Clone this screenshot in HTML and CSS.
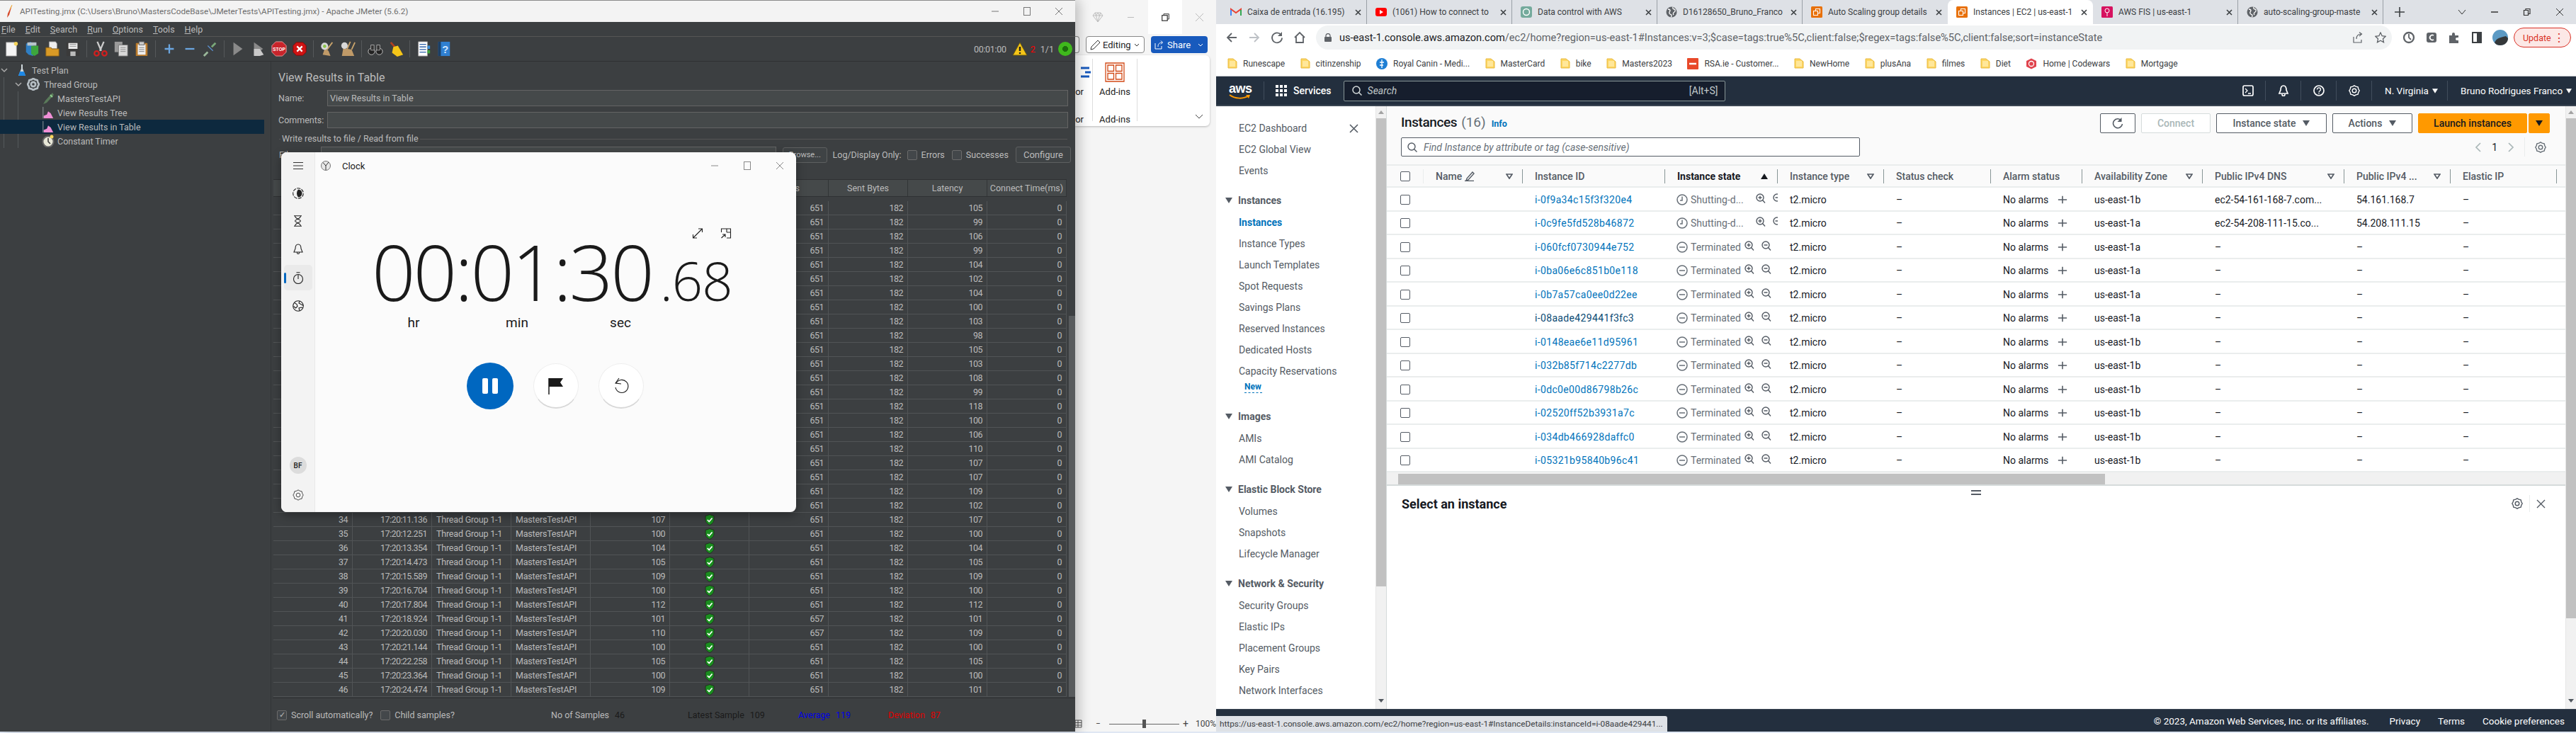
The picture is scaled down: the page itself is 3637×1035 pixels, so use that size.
FILE: index.html
```html
<!DOCTYPE html>
<html lang="en">
<head>
<meta charset="utf-8">
<title>Desktop</title>
<link rel="stylesheet" href="styles.css">
</head>
<body>
<svg class="sprite" width="0" height="0" aria-hidden="true">
  <symbol id="shield" viewBox="0 0 14 16"><path d="M7 .5 13 2.500V8c0 3.500-3 6-6 7.500C4 14 1 11.500 1 8V2.500z" fill="#1a8f1f" stroke="#20301f"/><path d="M3.800 8 6.200 10.500 10.500 5.500" fill="none" stroke="#fff" stroke-width="1.800"/></symbol>
  <symbol id="folder" viewBox="0 0 14 15"><path d="M1 1h7l5 4v9H1z" fill="#fdd663" stroke="#e8b93e"/><path d="M3 4h8v8H3z" fill="#ffe79a"/></symbol>
  <symbol id="globe" viewBox="0 0 16 16"><circle cx="8" cy="8" r="7.500" fill="#5f6368"/><path d="M3 4c2 0 3 1 3 2S4 8 5 10s3 1 3 3-1 2-1 2M10 1c-1 2 1 3 2 3s2 3 0 4-2 3-1 4" fill="none" stroke="#fff" stroke-width="1.300"/></symbol>
  <symbol id="awsbox" viewBox="0 0 16 16"><rect width="16" height="16" rx="1.500" fill="#e8710a"/><path d="M3.500 6.500h6v6h-6zM6.500 6.500v-3h6v6h-3" fill="none" stroke="#fff" stroke-width="1.100"/></symbol>
  <symbol id="tri" viewBox="0 0 10 8"><path d="M1 1h8L5 7z" fill="none" stroke="#545b64" stroke-width="1.700"/></symbol>
  <symbol id="down" viewBox="0 0 10 8"><path d="M0 0h10L5 8z" fill="currentColor"/></symbol>
  <symbol id="zplus" viewBox="0 0 14 14"><circle cx="6" cy="6" r="5" fill="none" stroke="#545b64" stroke-width="1.400"/><path d="M9.500 9.500 13 13.500M3.500 6h5M6 3.500v5" stroke="#545b64" stroke-width="1.400"/></symbol>
  <symbol id="zminus" viewBox="0 0 14 14"><circle cx="6" cy="6" r="5" fill="none" stroke="#545b64" stroke-width="1.400"/><path d="M9.500 9.500 13 13.500M3.500 6h5" stroke="#545b64" stroke-width="1.400"/></symbol>
  <symbol id="stclock" viewBox="0 0 16 16"><circle cx="8" cy="8" r="7" fill="none" stroke="#687078" stroke-width="1.500"/><path d="M8 3.500V9H5" fill="none" stroke="#687078" stroke-width="1.500"/></symbol>
  <symbol id="stminus" viewBox="0 0 16 16"><circle cx="8" cy="8" r="7" fill="none" stroke="#687078" stroke-width="1.500"/><path d="M4 8h8" stroke="#687078" stroke-width="1.500"/></symbol>
  <symbol id="plus" viewBox="0 0 16 16"><path d="M8 2v12M1 8h14" stroke="#545b64" stroke-width="1.800"/></symbol>
  <symbol id="gear" viewBox="0 0 20 20"><path d="M10 1 12.800 2.700 16.400 3.600 17.300 7.200 19 10 17.300 12.800 16.400 16.400 12.800 17.300 10 19 7.200 17.300 3.600 16.400 2.700 12.800 1 10 2.700 7.200 3.600 3.600 7.200 2.700Z" fill="none" stroke="currentColor"/><circle cx="10" cy="10" r="3.500" fill="none" stroke="currentColor"/></symbol>
  <symbol id="graph" viewBox="0 0 18 20"><path d="M2 19h15l-4-8-4-3-2 5-5 2z" fill="#ef8fd6"/><path d="M1 1v18" stroke="#9aa0a6"/></symbol>
  <symbol id="tabx" viewBox="0 0 9 9"><path d="M1 1l7 7M8 1 1 8" stroke="#3c4043" stroke-width="1.600"/></symbol>
</svg>

<section class="win jm">
  <header class="jm-title">
    <svg class="jm-feather" width="10" height="20" viewBox="0 0 10 20"><path d="M9 1 3 13l-1 6 3-4z" fill="#d64a2a"/><path d="M9 1 6 7" stroke="#f0b030"/></svg>
    <span class="jm-title-text">APITesting.jmx (C:\Users\Bruno\MastersCodeBase\JMeterTests\APITesting.jmx) - Apache JMeter (5.6.2)</span>
    <span class="winctl jm-ctl">
      <svg width="12" height="12" viewBox="0 0 12 12"><path d="M1 6h10" stroke="#777"/></svg>
      <svg width="12" height="12" viewBox="0 0 12 12"><rect x="1.500" y=".5" width="9" height="11" fill="none" stroke="#777"/></svg>
      <svg width="12" height="12" viewBox="0 0 12 12"><path d="M1 1l10 10M11 1 1 11" stroke="#777"/></svg>
    </span>
  </header>
  <nav class="jm-menu">
    <span><u>F</u>ile</span><span><u>E</u>dit</span><span><u>S</u>earch</span><span><u>R</u>un</span><span><u>O</u>ptions</span><span><u>T</u>ools</span><span><u>H</u>elp</span>
  </nav>
  <div class="jm-tools">
    <svg viewBox="0 0 24 24"><path d="M4 2h13l3 3v18H4z" fill="#f5f5f5" stroke="#999"/><circle cx="19" cy="4" r="3" fill="#f6d55c"/></svg>
    <svg viewBox="0 0 24 24"><path d="M3 4l7-3 4 3v19l-7-2-4-4z" fill="#2f7fc4"/><path d="M11 7h11v12l-6 4-5-3z" fill="#3da63d"/><path d="M5 2h14v5H5z" fill="#b8c4cc"/></svg>
    <svg viewBox="0 0 24 24"><path d="M7 1h10l2 3v8H7z" fill="#eee" stroke="#999"/><path d="M2 10h8l1 2h11v11H2z" fill="#d99a26" stroke="#8f6416"/></svg>
    <svg viewBox="0 0 24 24"><path d="M2 2h20v21H2z" fill="#3a3a3a"/><path d="M5 3h14v9H5z" fill="#e9e9e9"/><path d="M7 5h10M7 8h10" stroke="#888"/><path d="M8 16h8v7H8z" fill="#bbb"/></svg>
    <i class="sep"></i>
    <svg viewBox="0 0 24 24"><path d="M7 1l6 14M17 1l-6 14" stroke="#ccc" stroke-width="2.500"/><circle cx="6" cy="19" r="3.500" fill="none" stroke="#d11f1f" stroke-width="2.500"/><circle cx="18" cy="19" r="3.500" fill="none" stroke="#d11f1f" stroke-width="2.500"/></svg>
    <svg viewBox="0 0 24 24"><path d="M2 1h12v16H2z" fill="#9a9a9a"/><path d="M8 6h14v17H8z" fill="#d9d9d9" stroke="#777"/><path d="M11 10h8M11 13h8M11 16h8" stroke="#888"/></svg>
    <svg viewBox="0 0 24 24"><rect x="3" y="3" width="18" height="20" rx="1" fill="#b97a2b"/><rect x="6" y="5" width="12" height="16" fill="#eee"/><rect x="8" y="1" width="8" height="5" fill="#ccc" stroke="#666"/><path d="M8 10h8M8 13h8M8 16h8" stroke="#777"/></svg>
    <i class="sep"></i>
    <svg viewBox="0 0 24 24"><path d="M12 5v14M5 12h14" stroke="#6ba6e0" stroke-width="2.500"/></svg>
    <svg viewBox="0 0 24 24"><path d="M5 12h14" stroke="#6ba6e0" stroke-width="2.500"/></svg>
    <svg viewBox="0 0 24 24"><path d="M14 9l6-6" stroke="#7aa87a" stroke-width="3"/><path d="M2 23l6-6" stroke="#9ab89a" stroke-width="3"/><path d="M8 7l8 8" stroke="#5a8ecc" stroke-width="1.500"/></svg>
    <i class="sep"></i>
    <svg viewBox="0 0 24 24"><path d="M5 2l14 10L5 22z" fill="#8a8a8a"/></svg>
    <svg viewBox="0 0 24 24"><path d="M5 2l14 10L5 22z" fill="#8a8a8a"/><path d="M5 12h9l6 9-6 2H5z" fill="#c9c9c9"/></svg>
    <svg viewBox="0 0 24 24"><path d="M7 1h10l6 6v10l-6 6H7l-6-6V7z" fill="#c8242b" stroke="#e8a0a0"/><text x="12" y="15" class="stop-word">STOP</text></svg>
    <svg viewBox="0 0 24 24"><path d="M7 2h10l5 5v10l-5 5H7l-5-5V7z" fill="#d01414" stroke="#7a0a0a"/><path d="M8 8l8 8M16 8l-8 8" stroke="#fff" stroke-width="2.500"/></svg>
    <i class="sep"></i>
    <svg viewBox="0 0 24 24"><path d="M20 2 11 14" stroke="#c9a36b" stroke-width="2"/><path d="M8 12l6 3 3 8-12-2z" fill="#c09a68"/><circle cx="8" cy="8" r="5.500" fill="#d8d8d8"/><circle cx="8" cy="8" r="2.500" fill="#8bc34a"/></svg>
    <svg viewBox="0 0 24 24"><path d="M16 1 11 12M23 2l-5 11" stroke="#c9a36b" stroke-width="2"/><path d="M5 11l13 2 4 10H3z" fill="#c09a68"/><circle cx="7" cy="7" r="5" fill="#d8d8d8"/></svg>
    <i class="sep"></i>
    <svg viewBox="0 0 24 24"><circle cx="6" cy="16" r="5" fill="#222" stroke="#ccc"/><circle cx="18" cy="16" r="5" fill="#222" stroke="#ccc"/><path d="M5 6h5v8H5zM14 6h5v8h-5z" fill="#333" stroke="#aaa"/></svg>
    <svg viewBox="0 0 24 24"><path d="M4 2l7 8" stroke="#b04020" stroke-width="3"/><path d="M8 9l7-2 8 14-9 3-8-6z" fill="#f5c518"/></svg>
    <i class="sep"></i>
    <svg viewBox="0 0 24 24"><path d="M4 1h14v22H4z" fill="#fff" stroke="#999"/><path d="M6 5h10M6 9h10M6 13h10M6 17h10" stroke="#2a5fa8" stroke-width="1.500"/><path d="M18 7h4v5h-4z" fill="#3a8fd8"/><path d="M18 14h4v5h-4z" fill="#3da63d"/></svg>
    <svg viewBox="0 0 24 24"><path d="M3 1h18v22H3z" fill="#2f7fd0"/><path d="M3 1h4v22H3z" fill="#1c3f66"/><text x="14" y="18" class="help-word">?</text></svg>
    <span class="jm-status">
      <span class="jm-timer">00:01:00</span>
      <svg width="22" height="20" viewBox="0 0 22 20"><path d="M11 1 21 19H1z" fill="#f5c518" stroke="#6b5a10"/><path d="M11 7v6" stroke="#222" stroke-width="2.500"/><circle cx="11" cy="16" r="1.300" fill="#222"/></svg>
      <span class="jm-red">2</span>
      <span class="jm-count">1/1</span>
      <span class="jm-led"></span>
    </span>
  </div>
  <div class="jm-body">
    <aside class="jm-tree">
      <div class="tr lvl0"><svg class="chev" width="10" height="10" viewBox="0 0 10 10"><path d="M1 3l4 4 4-4" fill="none" stroke="#aaa" stroke-width="1.500"/></svg><svg width="12" height="18" viewBox="0 0 12 18"><path d="M5 1h2v6l4 10H1L5 7z" fill="#cfd8dc"/><path d="M3 11h6l2 6H1z" fill="#1e88e5"/></svg><span>Test Plan</span></div>
      <div class="tr lvl1"><svg class="chev" width="10" height="10" viewBox="0 0 10 10"><path d="M1 3l4 4 4-4" fill="none" stroke="#aaa" stroke-width="1.500"/></svg><svg class="tg" width="18" height="18"><use href="#gear"/></svg><span>Thread Group</span></div>
      <div class="tr lvl2"><svg width="18" height="18" viewBox="0 0 18 18"><path d="M15 1 5 12l-3 5 5-2L17 4z" fill="#5a7a5a"/><path d="M12 4l3 3" stroke="#8fd08f" stroke-width="2"/></svg><span>MastersTestAPI</span></div>
      <div class="tr lvl2"><svg width="18" height="18"><use href="#graph"/></svg><span>View Results Tree</span></div>
      <div class="tr lvl2 sel"><svg width="18" height="18"><use href="#graph"/></svg><span>View Results in Table</span></div>
      <div class="tr lvl2"><svg width="18" height="18" viewBox="0 0 18 18"><circle cx="9" cy="10" r="7.500" fill="#e8e8d8" stroke="#666" stroke-width="2"/><path d="M9 5v5l3 3" fill="none" stroke="#333" stroke-width="1.500"/><circle cx="14" cy="3" r="2.500" fill="#f6d55c"/></svg><span>Constant Timer</span></div>
    </aside>
    <div class="jm-split"></div>
    <main class="jm-panel">
      <h2 class="jm-h">View Results in Table</h2>
      <div class="jm-field"><label>Name:</label><div class="jm-input">View Results in Table</div></div>
      <div class="jm-field"><label>Comments:</label><div class="jm-input"></div></div>
      <div class="jm-legend"><span>Write results to file / Read from file</span></div>
      <div class="jm-file">
        <label>Filename</label><div class="jm-input jm-fn"></div>
        <span class="jm-btn jm-browse">Browse...</span>
        <span class="jm-log">Log/Display Only:</span>
        <span class="jm-cb"></span><span class="jm-cbt">Errors</span>
        <span class="jm-cb"></span><span class="jm-cbt">Successes</span>
        <span class="jm-btn jm-conf">Configure</span>
      </div>
      <div class="jm-tablewrap">
        <div class="jm-table">
          <div class="jh"><span>Sample #</span><span>Start Time</span><span>Thread Name</span><span>Label</span><span>Sample Time(ms)</span><span>Status</span><span>Bytes</span><span>Sent Bytes</span><span>Latency</span><span>Connect Time(ms)</span></div>
          <div class="jrows">
            <div class="jr skip"><span>651</span><span>182</span><span>105</span><span>0</span></div>
            <div class="jr skip"><span>651</span><span>182</span><span>99</span><span>0</span></div>
            <div class="jr skip"><span>651</span><span>182</span><span>106</span><span>0</span></div>
            <div class="jr skip"><span>651</span><span>182</span><span>99</span><span>0</span></div>
            <div class="jr skip"><span>651</span><span>182</span><span>104</span><span>0</span></div>
            <div class="jr skip"><span>651</span><span>182</span><span>102</span><span>0</span></div>
            <div class="jr skip"><span>651</span><span>182</span><span>104</span><span>0</span></div>
            <div class="jr skip"><span>651</span><span>182</span><span>100</span><span>0</span></div>
            <div class="jr skip"><span>651</span><span>182</span><span>103</span><span>0</span></div>
            <div class="jr skip"><span>651</span><span>182</span><span>98</span><span>0</span></div>
            <div class="jr skip"><span>651</span><span>182</span><span>105</span><span>0</span></div>
            <div class="jr skip"><span>651</span><span>182</span><span>103</span><span>0</span></div>
            <div class="jr skip"><span>651</span><span>182</span><span>108</span><span>0</span></div>
            <div class="jr skip"><span>651</span><span>182</span><span>99</span><span>0</span></div>
            <div class="jr skip"><span>651</span><span>182</span><span>118</span><span>0</span></div>
            <div class="jr skip"><span>651</span><span>182</span><span>100</span><span>0</span></div>
            <div class="jr skip"><span>651</span><span>182</span><span>106</span><span>0</span></div>
            <div class="jr skip"><span>651</span><span>182</span><span>110</span><span>0</span></div>
            <div class="jr skip"><span>651</span><span>182</span><span>107</span><span>0</span></div>
            <div class="jr skip"><span>651</span><span>182</span><span>107</span><span>0</span></div>
            <div class="jr skip"><span>651</span><span>182</span><span>109</span><span>0</span></div>
            <div class="jr skip"><span>651</span><span>182</span><span>102</span><span>0</span></div>
            <div class="jr"><span>34</span><span>17:20:11.136</span><span class="l">Thread Group 1-1</span><span class="l">MastersTestAPI</span><span>107</span><span class="c"><svg width="14" height="16"><use href="#shield"/></svg></span><span>651</span><span>182</span><span>107</span><span>0</span></div>
            <div class="jr"><span>35</span><span>17:20:12.251</span><span class="l">Thread Group 1-1</span><span class="l">MastersTestAPI</span><span>100</span><span class="c"><svg width="14" height="16"><use href="#shield"/></svg></span><span>651</span><span>182</span><span>100</span><span>0</span></div>
            <div class="jr"><span>36</span><span>17:20:13.354</span><span class="l">Thread Group 1-1</span><span class="l">MastersTestAPI</span><span>104</span><span class="c"><svg width="14" height="16"><use href="#shield"/></svg></span><span>651</span><span>182</span><span>104</span><span>0</span></div>
            <div class="jr"><span>37</span><span>17:20:14.473</span><span class="l">Thread Group 1-1</span><span class="l">MastersTestAPI</span><span>105</span><span class="c"><svg width="14" height="16"><use href="#shield"/></svg></span><span>651</span><span>182</span><span>105</span><span>0</span></div>
            <div class="jr"><span>38</span><span>17:20:15.589</span><span class="l">Thread Group 1-1</span><span class="l">MastersTestAPI</span><span>109</span><span class="c"><svg width="14" height="16"><use href="#shield"/></svg></span><span>651</span><span>182</span><span>109</span><span>0</span></div>
            <div class="jr"><span>39</span><span>17:20:16.704</span><span class="l">Thread Group 1-1</span><span class="l">MastersTestAPI</span><span>100</span><span class="c"><svg width="14" height="16"><use href="#shield"/></svg></span><span>651</span><span>182</span><span>100</span><span>0</span></div>
            <div class="jr"><span>40</span><span>17:20:17.804</span><span class="l">Thread Group 1-1</span><span class="l">MastersTestAPI</span><span>112</span><span class="c"><svg width="14" height="16"><use href="#shield"/></svg></span><span>651</span><span>182</span><span>112</span><span>0</span></div>
            <div class="jr"><span>41</span><span>17:20:18.924</span><span class="l">Thread Group 1-1</span><span class="l">MastersTestAPI</span><span>101</span><span class="c"><svg width="14" height="16"><use href="#shield"/></svg></span><span>657</span><span>182</span><span>101</span><span>0</span></div>
            <div class="jr"><span>42</span><span>17:20:20.030</span><span class="l">Thread Group 1-1</span><span class="l">MastersTestAPI</span><span>110</span><span class="c"><svg width="14" height="16"><use href="#shield"/></svg></span><span>657</span><span>182</span><span>109</span><span>0</span></div>
            <div class="jr"><span>43</span><span>17:20:21.144</span><span class="l">Thread Group 1-1</span><span class="l">MastersTestAPI</span><span>100</span><span class="c"><svg width="14" height="16"><use href="#shield"/></svg></span><span>651</span><span>182</span><span>100</span><span>0</span></div>
            <div class="jr"><span>44</span><span>17:20:22.258</span><span class="l">Thread Group 1-1</span><span class="l">MastersTestAPI</span><span>105</span><span class="c"><svg width="14" height="16"><use href="#shield"/></svg></span><span>651</span><span>182</span><span>105</span><span>0</span></div>
            <div class="jr"><span>45</span><span>17:20:23.364</span><span class="l">Thread Group 1-1</span><span class="l">MastersTestAPI</span><span>100</span><span class="c"><svg width="14" height="16"><use href="#shield"/></svg></span><span>651</span><span>182</span><span>100</span><span>0</span></div>
            <div class="jr"><span>46</span><span>17:20:24.474</span><span class="l">Thread Group 1-1</span><span class="l">MastersTestAPI</span><span>109</span><span class="c"><svg width="14" height="16"><use href="#shield"/></svg></span><span>651</span><span>182</span><span>101</span><span>0</span></div>
          </div>
        </div>
        <div class="jm-sb"><div class="jm-sbthumb"></div></div>
      </div>
      <footer class="jm-foot">
        <div class="jm-checks">
          <span class="jm-cb on">&#10003;</span><span class="jm-cbt">Scroll automatically?</span>
          <span class="jm-cb cb2"></span><span class="jm-cbt">Child samples?</span>
        </div>
        <div class="jm-stats">
          <span class="st-dark"><em>No of Samples</em><b>46</b></span>
          <span class="st-black"><em>Latest Sample</em><b>109</b></span>
          <span class="st-blue"><em>Average</em><b>119</b></span>
          <span class="st-red"><em>Deviation</em><b>87</b></span>
        </div>
      </footer>
    </main>
  </div>
</section>

<section class="win word">
  <div class="w-top">
    <svg class="w-diamond" width="16" height="15" viewBox="0 0 16 15"><path d="M4 1h8l3 4-7 9-7-9zM1 5h14M5.500 5 8 14l2.500-9M4 1l1.500 4L8 1l2.500 4L12 1" fill="none" stroke="#bdbdbd"/></svg>
    <span class="w-dash"></span>
    <span class="w-restore"><svg width="11" height="11" viewBox="0 0 11 11"><rect x=".7" y="2.700" width="7.500" height="7.500" fill="none" stroke="#333" stroke-width="1.200"/><path d="M3 2.500V.7h7.300V8H8.500" fill="none" stroke="#333"/></svg></span>
    <svg class="w-x" width="13" height="13" viewBox="0 0 13 13"><path d="M1 1l11 11M12 1 1 12" stroke="#bbb"/></svg>
  </div>
  <div class="w-btns">
    <span class="w-stub"></span>
    <span class="w-edit"><svg width="15" height="15" viewBox="0 0 15 15"><path d="M11 1l3 3-9 9-4 1 1-4z" fill="none" stroke="#333"/></svg>Editing<i class="w-caret"><svg width="8" height="5" viewBox="0 0 8 5"><path d="M1 1l3 3 3-3" fill="none" stroke="#333"/></svg></i></span>
    <span class="w-share"><svg width="13" height="13" viewBox="0 0 13 13"><path d="M1 4v8h9V8M5 9c0-4 2-6 6-6M9 .5 11.500 3 9 5.500" fill="none" stroke="#fff"/></svg>Share<i class="w-caret"><svg width="8" height="5" viewBox="0 0 8 5"><path d="M1 1l3 3 3-3" fill="none" stroke="#fff"/></svg></i></span>
  </div>
  <div class="w-ribbon">
    <div class="w-clip">
      <svg width="14" height="28" viewBox="0 0 14 28"><path d="M0 8h12M6 14h8M0 20h12" stroke="#185abd" stroke-width="3"/></svg>
      <span class="w-lab">or</span><span class="w-lab2">or</span>
    </div>
    <div class="w-addins">
      <svg width="28" height="28" viewBox="0 0 28 28"><path d="M1 1h26v26H1zM4 4h8.500v8.500H4zM15.500 4H24v8.500h-8.500zM4 15.500h8.500V24H4zM15.500 15.500H24V24h-8.500z" fill="none" stroke="#d24a16" stroke-width="1.300"/></svg>
      <span class="w-lab">Add-ins</span><span class="w-lab2">Add-ins</span>
    </div>
    <svg class="w-chev" width="12" height="7" viewBox="0 0 12 7"><path d="M1 1l5 5 5-5" fill="none" stroke="#444"/></svg>
  </div>
  <div class="w-status">
    <svg width="10" height="12" viewBox="0 0 10 12"><path d="M0 1h9v10H0zM0 4.500h9M0 8h9M4 1v10" fill="none" stroke="#555"/></svg>
    <span class="w-minus">&minus;</span>
    <span class="w-slider"><i></i></span>
    <span class="w-plus">+</span>
    <span class="w-pct">100%</span>
  </div>
</section>

<section class="win browser">
  <div class="tabs">
    <div class="tab"><svg width="16" height="12" viewBox="0 0 16 12"><path d="M1 11V2l7 5 7-5v9" fill="none" stroke="#ea4335" stroke-width="2"/><path d="M1 11V3" stroke="#4285f4" stroke-width="2"/><path d="M15 11V3" stroke="#34a853" stroke-width="2"/></svg><span class="t">Caixa de entrada (16.195)</span><svg class="x" width="9" height="9"><use href="#tabx"/></svg></div>
    <div class="tab"><svg width="16" height="12" viewBox="0 0 16 12"><rect width="16" height="12" rx="3" fill="#f00"/><path d="M6 3l5 3-5 3z" fill="#fff"/></svg><span class="t">(1061) How to connect to</span><svg class="x" width="9" height="9"><use href="#tabx"/></svg></div>
    <div class="tab"><svg width="16" height="16" viewBox="0 0 16 16"><rect width="16" height="16" rx="3" fill="#74aa9c"/><circle cx="8" cy="8" r="4.500" fill="none" stroke="#fff" stroke-width="1.400"/></svg><span class="t">Data control with AWS</span><svg class="x" width="9" height="9"><use href="#tabx"/></svg></div>
    <div class="tab"><svg width="16" height="16"><use href="#globe"/></svg><span class="t">D16128650_Bruno_Franco</span><svg class="x" width="9" height="9"><use href="#tabx"/></svg></div>
    <div class="tab"><svg width="16" height="16"><use href="#awsbox"/></svg><span class="t">Auto Scaling group details</span><svg class="x" width="9" height="9"><use href="#tabx"/></svg></div>
    <div class="tab tab-on"><svg width="16" height="16"><use href="#awsbox"/></svg><span class="t">Instances | EC2 | us-east-1</span><svg class="x" width="9" height="9"><use href="#tabx"/></svg></div>
    <div class="tab"><svg width="16" height="16" viewBox="0 0 16 16"><rect width="16" height="16" rx="1.500" fill="#d6125f"/><circle cx="8" cy="6" r="3" fill="none" stroke="#fff"/><path d="M8 9v5" stroke="#fff"/></svg><span class="t">AWS FIS | us-east-1</span><svg class="x" width="9" height="9"><use href="#tabx"/></svg></div>
    <div class="tab"><svg width="16" height="16"><use href="#globe"/></svg><span class="t">auto-scaling-group-maste</span><svg class="x" width="9" height="9"><use href="#tabx"/></svg></div>
    <span class="newtab"><svg width="14" height="14" viewBox="0 0 14 14"><path d="M7 0v14M0 7h14" stroke="#3c4043" stroke-width="1.600"/></svg></span>
    <span class="winctl br-ctl">
      <svg width="12" height="8" viewBox="0 0 12 8"><path d="M1 1l5 6 5-6" fill="none" stroke="#333"/></svg>
      <svg width="12" height="8" viewBox="0 0 12 8"><path d="M1 4h10" stroke="#333" stroke-width="1.500"/></svg>
      <svg width="12" height="12" viewBox="0 0 12 12"><path d="M1.500 3.500h6v7h-6zM4 3V1.500h6v7H8" fill="none" stroke="#333" stroke-width="1.200"/></svg>
      <svg width="12" height="12" viewBox="0 0 12 12"><path d="M1 1l10 10M11 1 1 11" stroke="#333"/></svg>
    </span>
  </div>
  <div class="toolbar">
    <svg width="20" height="20" viewBox="0 0 20 20"><path d="M17 10H4M10 4l-6 6 6 6" fill="none" stroke="#5f6368" stroke-width="1.800"/></svg>
    <svg width="20" height="20" viewBox="0 0 20 20"><path d="M3 10h13M10 4l6 6-6 6" fill="none" stroke="#bdc1c6" stroke-width="1.800"/></svg>
    <svg width="20" height="20" viewBox="0 0 20 20"><path d="M15.500 6A7 7 0 1 0 17 10.500" fill="none" stroke="#5f6368" stroke-width="1.800"/><path d="M17 2v6h-6" fill="#5f6368"/></svg>
    <svg width="20" height="20" viewBox="0 0 20 20"><path d="M3 10l7-7 7 7M5 9v8h10V9" fill="none" stroke="#5f6368" stroke-width="1.800"/></svg>
    <div class="addr">
      <svg width="10" height="12" viewBox="0 0 10 12"><rect y="5" width="10" height="7" rx="1" fill="#5f6368"/><path d="M2 5V3.500a3 3 0 0 1 6 0V5" fill="none" stroke="#5f6368" stroke-width="1.300"/></svg>
      <span class="url">us-east-1.console.aws.amazon.com<span class="urlg">/ec2/home?region=us-east-1#Instances:v=3;$case=tags:true%5C,client:false;$regex=tags:false%5C,client:false;sort=instanceState</span></span>
      <svg width="16" height="16" viewBox="0 0 16 16"><path d="M2 7v8h11v-4M6 10c0-5 3-7 7-7M10 .5 13.500 3 10 6" fill="none" stroke="#5f6368" stroke-width="1.200"/></svg>
      <svg class="star" width="16" height="16" viewBox="0 0 16 16"><path d="M8 1l2.200 4.700 5 .6-3.700 3.500 1 5L8 12.300 3.500 14.800l1-5L.8 6.300l5-.6z" fill="none" stroke="#5f6368" stroke-width="1.300"/></svg>
    </div>
    <svg class="ext" width="20" height="20" viewBox="0 0 20 20"><circle cx="10" cy="10" r="7" fill="none" stroke="#5f6368" stroke-width="2.300"/><path d="M10 5v5l3 3" fill="none" stroke="#5f6368" stroke-width="1.800"/></svg>
    <svg width="20" height="20" viewBox="0 0 20 20"><rect x="3" y="3" width="14" height="14" rx="3" fill="#5f6368"/><path d="M13 7a3.500 3.500 0 1 0 0 6" fill="none" stroke="#fff" stroke-width="1.800"/></svg>
    <svg width="20" height="20" viewBox="0 0 20 20"><path d="M3 7h4V5a2 2 0 0 1 4 0v2h5v3h-2a2 2 0 0 0 0 4h2v4H3z" fill="#5f6368"/></svg>
    <svg width="20" height="20" viewBox="0 0 20 20"><path d="M4 3h12v14H4z" fill="none" stroke="#3c4043" stroke-width="2"/><path d="M10 3h6v14h-6z" fill="#3c4043"/></svg>
    <svg class="avatar" width="22" height="22" viewBox="0 0 22 22"><circle cx="11" cy="11" r="11" fill="#5c9ac4"/><path d="M3 18c3-6 7-7 16-9l3 3c0 6-5 10-11 10-3 0-6-1-8-4z" fill="#34383a"/></svg>
    <span class="update">Update<i>&#8942;</i></span>
  </div>
  <div class="bookmarks">
    <span class="bm"><svg width="14" height="15"><use href="#folder"/></svg>Runescape</span>
    <span class="bm"><svg width="14" height="15"><use href="#folder"/></svg>citinzenship</span>
    <span class="bm"><svg width="16" height="16" viewBox="0 0 16 16"><circle cx="8" cy="8" r="8" fill="#1f7fd4"/><path d="M8 2v12M5 6h6M5 10h5" stroke="#fff" stroke-width="1.300"/></svg>Royal Canin - Medi...</span>
    <span class="bm"><svg width="14" height="15"><use href="#folder"/></svg>MasterCard</span>
    <span class="bm"><svg width="14" height="15"><use href="#folder"/></svg>bike</span>
    <span class="bm"><svg width="14" height="15"><use href="#folder"/></svg>Masters2023</span>
    <span class="bm"><svg width="16" height="16" viewBox="0 0 16 16"><rect width="16" height="16" rx="1" fill="#e8492a"/><path d="M3 8h10" stroke="#fff" stroke-width="2.500"/></svg>RSA.ie - Customer...</span>
    <span class="bm"><svg width="14" height="15"><use href="#folder"/></svg>NewHome</span>
    <span class="bm"><svg width="14" height="15"><use href="#folder"/></svg>plusAna</span>
    <span class="bm"><svg width="14" height="15"><use href="#folder"/></svg>filmes</span>
    <span class="bm"><svg width="14" height="15"><use href="#folder"/></svg>Diet</span>
    <span class="bm"><svg width="16" height="16" viewBox="0 0 16 16"><path d="M8 .5l7 3.500v8l-7 3.500L1 12V4z" fill="#e0444e"/><circle cx="8" cy="8" r="3.500" fill="none" stroke="#fff" stroke-width="1.300"/></svg>Home | Codewars</span>
    <span class="bm"><svg width="14" height="15"><use href="#folder"/></svg>Mortgage</span>
  </div>
  <div class="aws">
    <nav class="awsnav">
      <span class="awslogo">aws<svg width="31" height="7" viewBox="0 0 31 7"><path d="M1 1c8 6 20 6 27 1" fill="none" stroke="#f90" stroke-width="2"/><path d="M24 1h6l-2 5z" fill="#f90"/></svg></span>
      <span class="nsep"></span>
      <svg class="svc" width="16" height="16" viewBox="0 0 16 16"><path d="M0 0h4v4H0zM6 0h4v4H6zM12 0h4v4h-4zM0 6h4v4H0zM6 6h4v4H6zM12 6h4v4h-4zM0 12h4v4H0zM6 12h4v4H6zM12 12h4v4h-4z" fill="#fff"/></svg>
      <span class="svct">Services</span>
      <div class="nsearch">
        <svg width="14" height="14" viewBox="0 0 14 14"><circle cx="6" cy="6" r="5" fill="none" stroke="#d5dbdb" stroke-width="1.500"/><path d="M9.500 9.500 13.500 13.500" stroke="#d5dbdb" stroke-width="1.500"/></svg>
        <em>Search</em>
        <span>[Alt+S]</span>
      </div>
      <div class="nright">
        <span class="nico"><svg width="16" height="16" viewBox="0 0 16 16"><rect x="1" y="1" width="14" height="14" rx="2" fill="none" stroke="#fff" stroke-width="1.700"/><path d="M4 5l3 3-3 3M8 12h4" fill="none" stroke="#fff" stroke-width="1.300"/></svg></span>
        <span class="nico"><svg width="16" height="16" viewBox="0 0 16 16"><path d="M8 1C5 1 4 4 4 7l-2 5h12l-2-5c0-3-1-6-4-6zM6 13v.5a2 2 0 0 0 4 0V13" fill="none" stroke="#fff" stroke-width="1.700"/></svg></span>
        <span class="nico"><svg width="16" height="16" viewBox="0 0 16 16"><circle cx="8" cy="8" r="7" fill="none" stroke="#fff" stroke-width="1.700"/><path d="M5.500 6.500c0-3.500 5-3.500 5 0C10.500 8.500 8 8 8 10.500M8 11.500v1.500" fill="none" stroke="#fff" stroke-width="1.300"/></svg></span>
        <span class="nico"><svg class="g-heavy" width="16" height="16"><use href="#gear"/></svg></span>
        <span class="ncell reg">N. Virginia<svg width="8" height="7"><use href="#down"/></svg></span>
        <span class="ncell usr">Bruno Rodrigues Franco<svg width="8" height="7"><use href="#down"/></svg></span>
      </div>
    </nav>
    <div class="awsbody">
      <aside class="side">
        <div class="side-top"><a>EC2 Dashboard</a><svg width="13" height="13" viewBox="0 0 13 13"><path d="M1 1l11 11M12 1 1 12" stroke="#545b64" stroke-width="1.600"/></svg></div>
        <a>EC2 Global View</a>
        <a>Events</a>
        <h4 class="first"><svg width="10" height="8"><use href="#down"/></svg>Instances</h4>
        <a class="cur">Instances</a>
        <a>Instance Types</a>
        <a>Launch Templates</a>
        <a>Spot Requests</a>
        <a>Savings Plans</a>
        <a>Reserved Instances</a>
        <a>Dedicated Hosts</a>
        <a>Capacity Reservations</a>
        <span class="new">New</span>
        <h4 class="img"><svg width="10" height="8"><use href="#down"/></svg>Images</h4>
        <a>AMIs</a>
        <a>AMI Catalog</a>
        <h4><svg width="10" height="8"><use href="#down"/></svg>Elastic Block Store</h4>
        <a>Volumes</a>
        <a>Snapshots</a>
        <a>Lifecycle Manager</a>
        <h4><svg width="10" height="8"><use href="#down"/></svg>Network &amp; Security</h4>
        <a>Security Groups</a>
        <a>Elastic IPs</a>
        <a>Placement Groups</a>
        <a>Key Pairs</a>
        <a>Network Interfaces</a>
      </aside>
      <div class="vsb vsb-l"><i class="up"></i><b></b><i class="dn"></i></div>
      <main class="awsmain">
        <section class="top">
          <div class="tophead">
            <div class="ttl"><h1>Instances</h1><span class="cnt">(16)</span><a>Info</a></div>
            <div class="acts">
              <span class="ab ab-ref"><svg width="16" height="16" viewBox="0 0 16 16"><path d="M13 4a6.500 6.500 0 1 0 1.500 5" fill="none" stroke="#545b64" stroke-width="1.600"/><path d="M13.500 0v6h-6" fill="#545b64"/></svg></span>
              <span class="ab ab-con">Connect</span>
              <span class="ab ab-state">Instance state<svg width="10" height="8"><use href="#down"/></svg></span>
              <span class="ab ab-act">Actions<svg width="10" height="8"><use href="#down"/></svg></span>
              <span class="ab ab-launch">Launch instances</span>
              <span class="ab ab-split"><svg width="10" height="8"><use href="#down"/></svg></span>
            </div>
          </div>
          <div class="toprow2">
            <div class="filt"><svg width="14" height="14" viewBox="0 0 14 14"><circle cx="6" cy="6" r="5" fill="none" stroke="#545b64" stroke-width="1.400"/><path d="M9.500 9.500 13.500 13.500" stroke="#545b64" stroke-width="1.400"/></svg><em>Find Instance by attribute or tag (case-sensitive)</em></div>
            <div class="pager">
              <svg width="10" height="14" viewBox="0 0 10 14"><path d="M8 1 2 7l6 6" fill="none" stroke="#aab7b8" stroke-width="1.700"/></svg>
              <span>1</span>
              <svg width="10" height="14" viewBox="0 0 10 14"><path d="M2 1l6 6-6 6" fill="none" stroke="#aab7b8" stroke-width="1.700"/></svg>
              <span class="psep"></span>
              <svg class="pgear g-heavy" width="16" height="16"><use href="#gear"/></svg>
            </div>
          </div>
          <div class="grid ghead">
            <div class="hc hc-cb"><span class="box"></span></div>
            <div class="hc"><span class="nm">Name<svg width="15" height="14" viewBox="0 0 15 14"><path d="M12 1 4 10l-1 3 3-1 8-9zM1 13.500h13" fill="none" stroke="#545b64" stroke-width="1.400"/></svg></span><svg class="flt" width="10" height="8"><use href="#tri"/></svg></div>
            <div class="hc"><span>Instance ID</span></div>
            <div class="hc sorted"><span>Instance state</span><svg class="flt" width="10" height="8" viewBox="0 0 10 8"><path d="M0 8h10L5 0z" fill="#16191f"/></svg></div>
            <div class="hc"><span>Instance type</span><svg class="flt" width="10" height="8"><use href="#tri"/></svg></div>
            <div class="hc"><span>Status check</span></div>
            <div class="hc"><span>Alarm status</span></div>
            <div class="hc"><span>Availability Zone</span><svg class="flt" width="10" height="8"><use href="#tri"/></svg></div>
            <div class="hc"><span>Public IPv4 DNS</span><svg class="flt" width="10" height="8"><use href="#tri"/></svg></div>
            <div class="hc"><span>Public IPv4 ...</span><svg class="flt" width="10" height="8"><use href="#tri"/></svg></div>
            <div class="hc"><span>Elastic IP</span></div>
          </div>
          <div class="grid row"><div><span class="box"></span></div><div></div><div><a class="id">i-0f9a34c15f3f320e4</a></div><div class="state shut"><svg width="16" height="16"><use href="#stclock"/></svg><span>Shutting-d...</span><svg width="14" height="14"><use href="#zplus"/></svg><svg width="14" height="14"><use href="#zminus"/></svg></div><div>t2.micro</div><div>&ndash;</div><div class="al">No alarms<svg width="14" height="14"><use href="#plus"/></svg></div><div>us-east-1b</div><div>ec2-54-161-168-7.com...</div><div>54.161.168.7</div><div>&ndash;</div></div>
          <div class="grid row"><div><span class="box"></span></div><div></div><div><a class="id">i-0c9fe5fd528b46872</a></div><div class="state shut"><svg width="16" height="16"><use href="#stclock"/></svg><span>Shutting-d...</span><svg width="14" height="14"><use href="#zplus"/></svg><svg width="14" height="14"><use href="#zminus"/></svg></div><div>t2.micro</div><div>&ndash;</div><div class="al">No alarms<svg width="14" height="14"><use href="#plus"/></svg></div><div>us-east-1a</div><div>ec2-54-208-111-15.co...</div><div>54.208.111.15</div><div>&ndash;</div></div>
          <div class="grid row"><div><span class="box"></span></div><div></div><div><a class="id">i-060fcf0730944e752</a></div><div class="state"><svg width="16" height="16"><use href="#stminus"/></svg><span>Terminated</span><svg width="14" height="14"><use href="#zplus"/></svg><svg width="14" height="14"><use href="#zminus"/></svg></div><div>t2.micro</div><div>&ndash;</div><div class="al">No alarms<svg width="14" height="14"><use href="#plus"/></svg></div><div>us-east-1a</div><div>&ndash;</div><div>&ndash;</div><div>&ndash;</div></div>
          <div class="grid row"><div><span class="box"></span></div><div></div><div><a class="id">i-0ba06e6c851b0e118</a></div><div class="state"><svg width="16" height="16"><use href="#stminus"/></svg><span>Terminated</span><svg width="14" height="14"><use href="#zplus"/></svg><svg width="14" height="14"><use href="#zminus"/></svg></div><div>t2.micro</div><div>&ndash;</div><div class="al">No alarms<svg width="14" height="14"><use href="#plus"/></svg></div><div>us-east-1a</div><div>&ndash;</div><div>&ndash;</div><div>&ndash;</div></div>
          <div class="grid row"><div><span class="box"></span></div><div></div><div><a class="id">i-0b7a57ca0ee0d22ee</a></div><div class="state"><svg width="16" height="16"><use href="#stminus"/></svg><span>Terminated</span><svg width="14" height="14"><use href="#zplus"/></svg><svg width="14" height="14"><use href="#zminus"/></svg></div><div>t2.micro</div><div>&ndash;</div><div class="al">No alarms<svg width="14" height="14"><use href="#plus"/></svg></div><div>us-east-1a</div><div>&ndash;</div><div>&ndash;</div><div>&ndash;</div></div>
          <div class="grid row"><div><span class="box"></span></div><div></div><div><a class="id hov">i-08aade429441f3fc3</a></div><div class="state"><svg width="16" height="16"><use href="#stminus"/></svg><span>Terminated</span><svg width="14" height="14"><use href="#zplus"/></svg><svg width="14" height="14"><use href="#zminus"/></svg></div><div>t2.micro</div><div>&ndash;</div><div class="al">No alarms<svg width="14" height="14"><use href="#plus"/></svg></div><div>us-east-1a</div><div>&ndash;</div><div>&ndash;</div><div>&ndash;</div></div>
          <div class="grid row"><div><span class="box"></span></div><div></div><div><a class="id">i-0148eae6e11d95961</a></div><div class="state"><svg width="16" height="16"><use href="#stminus"/></svg><span>Terminated</span><svg width="14" height="14"><use href="#zplus"/></svg><svg width="14" height="14"><use href="#zminus"/></svg></div><div>t2.micro</div><div>&ndash;</div><div class="al">No alarms<svg width="14" height="14"><use href="#plus"/></svg></div><div>us-east-1b</div><div>&ndash;</div><div>&ndash;</div><div>&ndash;</div></div>
          <div class="grid row"><div><span class="box"></span></div><div></div><div><a class="id">i-032b85f714c2277db</a></div><div class="state"><svg width="16" height="16"><use href="#stminus"/></svg><span>Terminated</span><svg width="14" height="14"><use href="#zplus"/></svg><svg width="14" height="14"><use href="#zminus"/></svg></div><div>t2.micro</div><div>&ndash;</div><div class="al">No alarms<svg width="14" height="14"><use href="#plus"/></svg></div><div>us-east-1b</div><div>&ndash;</div><div>&ndash;</div><div>&ndash;</div></div>
          <div class="grid row"><div><span class="box"></span></div><div></div><div><a class="id">i-0dc0e00d86798b26c</a></div><div class="state"><svg width="16" height="16"><use href="#stminus"/></svg><span>Terminated</span><svg width="14" height="14"><use href="#zplus"/></svg><svg width="14" height="14"><use href="#zminus"/></svg></div><div>t2.micro</div><div>&ndash;</div><div class="al">No alarms<svg width="14" height="14"><use href="#plus"/></svg></div><div>us-east-1b</div><div>&ndash;</div><div>&ndash;</div><div>&ndash;</div></div>
          <div class="grid row"><div><span class="box"></span></div><div></div><div><a class="id">i-02520ff52b3931a7c</a></div><div class="state"><svg width="16" height="16"><use href="#stminus"/></svg><span>Terminated</span><svg width="14" height="14"><use href="#zplus"/></svg><svg width="14" height="14"><use href="#zminus"/></svg></div><div>t2.micro</div><div>&ndash;</div><div class="al">No alarms<svg width="14" height="14"><use href="#plus"/></svg></div><div>us-east-1b</div><div>&ndash;</div><div>&ndash;</div><div>&ndash;</div></div>
          <div class="grid row"><div><span class="box"></span></div><div></div><div><a class="id">i-034db466928daffc0</a></div><div class="state"><svg width="16" height="16"><use href="#stminus"/></svg><span>Terminated</span><svg width="14" height="14"><use href="#zplus"/></svg><svg width="14" height="14"><use href="#zminus"/></svg></div><div>t2.micro</div><div>&ndash;</div><div class="al">No alarms<svg width="14" height="14"><use href="#plus"/></svg></div><div>us-east-1b</div><div>&ndash;</div><div>&ndash;</div><div>&ndash;</div></div>
          <div class="grid row"><div><span class="box"></span></div><div></div><div><a class="id">i-05321b95840b96c41</a></div><div class="state"><svg width="16" height="16"><use href="#stminus"/></svg><span>Terminated</span><svg width="14" height="14"><use href="#zplus"/></svg><svg width="14" height="14"><use href="#zminus"/></svg></div><div>t2.micro</div><div>&ndash;</div><div class="al">No alarms<svg width="14" height="14"><use href="#plus"/></svg></div><div>us-east-1b</div><div>&ndash;</div><div>&ndash;</div><div>&ndash;</div></div>
          <div class="hsb"><i></i><b></b></div>
        </section>
        <section class="bottom">
          <div class="handle"></div>
          <div class="bothead">
            <h3>Select an instance</h3>
            <div class="botico"><svg class="g-heavy" width="16" height="16"><use href="#gear"/></svg><span class="psep2"></span><svg width="13" height="13" viewBox="0 0 13 13"><path d="M1 1l11 11M12 1 1 12" stroke="#545b64" stroke-width="1.400"/></svg></div>
          </div>
        </section>
      </main>
      <div class="vsb vsb-r"><i class="up"></i><b></b><i class="dn"></i></div>
    </div>
    <footer class="awsfoot">
      <span class="cr">&copy; 2023, Amazon Web Services, Inc. or its affiliates.</span>
      <a>Privacy</a><a>Terms</a><a>Cookie preferences</a>
    </footer>
    <div class="statusbubble">https://us-east-1.console.aws.amazon.com/ec2/home?region=us-east-1#InstanceDetails:instanceId=i-08aade429441...</div>
  </div>
</section>

<section class="win clock">
  <aside class="c-side">
    <span class="ci ci-menu"><svg width="16" height="12" viewBox="0 0 16 12"><path d="M1 1.500h14M1 6h14M1 10.500h14" stroke="#333" stroke-width="1.100"/></svg></span>
    <span class="ci ci-2"><svg width="16" height="16" viewBox="0 0 16 16"><circle cx="8" cy="8" r="7.300" fill="none" stroke="#222" stroke-width="1.100" stroke-dasharray="5 1.500"/><path d="M8 2.500a5.500 5.500 0 0 1 0 11 8 8 0 0 1-2-5.500 8 8 0 0 1 2-5.500z" fill="#222"/></svg></span>
    <span class="ci"><svg width="13" height="16" viewBox="0 0 13 16"><path d="M1 .7h11M1 15.300h11M2.500 1c0 4 8 5 8 7s-8 3-8 7M10.500 1c0 4-8 5-8 7s8 3 8 7" fill="none" stroke="#222" stroke-width="1.100"/></svg></span>
    <span class="ci"><svg width="14" height="16" viewBox="0 0 14 16"><path d="M7 1C4 1 3 4 3 7l-2 5h12l-2-5c0-3-1-6-4-6zM5.500 12v1a1.500 1.500 0 0 0 3 0v-1" fill="none" stroke="#222" stroke-width="1.100"/></svg></span>
    <span class="ci ci-on"><svg width="16" height="17" viewBox="0 0 16 17"><circle cx="8" cy="10" r="6.500" fill="none" stroke="#222" stroke-width="1.100"/><path d="M5.500 .7h5M8 4v6" fill="none" stroke="#222" stroke-width="1.100"/></svg></span>
    <span class="ci"><svg width="16" height="16" viewBox="0 0 16 16"><circle cx="8" cy="8" r="7.300" fill="none" stroke="#222" stroke-width="1.100"/><path d="M2.500 3.500l3.500 2 1 3-2.500 2.500-3-2.500M10 1l-1 3 3.500 2 3 1.500M10 15l-1-4 3.500-1 2 1" fill="none" stroke="#222" stroke-width="1.100"/></svg></span>
    <span class="ci-bf">BF</span>
    <span class="ci ci-set"><svg class="ci-gear" width="16" height="16"><use href="#gear"/></svg></span>
  </aside>
  <div class="c-main">
    <header class="c-title">
      <svg width="14" height="14" viewBox="0 0 14 14"><circle cx="7" cy="7" r="6.500" fill="#e8e8e8" stroke="#777"/><path d="M3 2.500 7 7l4-5M7 7v6" fill="none" stroke="#333"/></svg>
      <span class="c-name">Clock</span>
      <span class="winctl c-ctl">
        <svg width="12" height="12" viewBox="0 0 12 12"><path d="M1 6h10" stroke="#888"/></svg>
        <svg width="12" height="12" viewBox="0 0 12 12"><rect x="1.500" y=".5" width="9" height="11" fill="none" stroke="#888"/></svg>
        <svg width="12" height="12" viewBox="0 0 12 12"><path d="M1 1l10 10M11 1 1 11" stroke="#888"/></svg>
      </span>
    </header>
    <div class="c-expand">
      <svg width="16" height="15" viewBox="0 0 16 15"><path d="M2 13.500 14 1.500M9 1h5.500v5M1.500 9v5H7" fill="none" stroke="#222" stroke-width="1.100"/></svg>
      <svg width="16" height="15" viewBox="0 0 16 15"><path d="M1.500 6V1h13v13H9M9 6V1M9 6h5.500M1.500 14 7 9M3 9h4v4" fill="none" stroke="#222" stroke-width="1.100"/></svg>
    </div>
    <div class="c-time"><span>00:01:30</span><span class="c-ms">.68</span></div>
    <div class="c-labels"><span>hr</span><span>min</span><span>sec</span></div>
    <div class="c-btns">
      <span class="cb cb-pause"><svg width="24" height="24" viewBox="0 0 24 24"><rect x="1" y="1" width="8" height="22" rx="2" fill="#fff"/><rect x="15" y="1" width="8" height="22" rx="2" fill="#fff"/></svg></span>
      <span class="cb"><svg width="22" height="24" viewBox="0 0 22 24"><path d="M1 1h20l-4 6 4 6H1z" fill="#1a1a1a"/><path d="M1 1v23" stroke="#1a1a1a" stroke-width="1.500"/></svg></span>
      <span class="cb"><svg width="24" height="24" viewBox="0 0 24 24"><path d="M5 8a9 9 0 1 1-1 6" fill="none" stroke="#1a1a1a" stroke-width="1.100"/><path d="M9 1 4 8l8 1" fill="none" stroke="#1a1a1a" stroke-width="1.100"/></svg></span>
    </div>
  </div>
</section>
</body>
</html>
```

FILE: styles.css
```css
*{box-sizing:border-box}
html,body{margin:0;padding:0}
body{position:relative;width:3637px;height:1035px;overflow:hidden;background:#dfe7f3;font-family:Roboto,"Liberation Sans",sans-serif;color:#16191f}
.sprite{position:absolute}
svg{flex:none;display:block}
a{color:inherit;text-decoration:none}
em{font-style:normal}
h1,h2,h3,h4{margin:0;font-weight:400}
.win{position:absolute;top:0;height:1033px;display:flex;flex-direction:column}
.winctl{display:flex;align-items:center;margin-left:auto}

/* JMeter */
.jm{left:0;width:1518px;background:#3c3f41;color:#bbb;font-size:12.500px;border-top:1px solid #8a8a8a;box-shadow:6px 0 16px rgba(0,0,0,.22);z-index:1}
.jm-title{height:30px;flex:none;background:#f3f3f3;display:flex;align-items:center;padding-left:8px;color:#6d6d6d}
.jm-feather{margin-right:10px}
.jm-title-text{font-size:11.700px}
.jm-ctl{gap:33px;padding-right:17px}
.jm-menu{height:21px;flex:none;display:flex;align-items:center;gap:14px;padding-left:2px;border-bottom:1px solid #555;font-size:12.500px}
.jm-tools{height:35px;flex:none;display:flex;align-items:center;padding-left:4px;gap:5px;border-bottom:1px solid #2f3133}
.jm-tools>svg{width:24px;height:22px}
.sep{width:1px;height:24px;background:#56595b;margin:0 2px}
.stop-word{font:700 7px "Liberation Sans",sans-serif;fill:#fff;text-anchor:middle}
.help-word{font:700 16px "Liberation Sans",sans-serif;fill:#cfe6ff;text-anchor:middle}
.jm-status{margin-left:auto;display:flex;align-items:center;padding-right:4px}
.jm-timer{margin-right:8px;letter-spacing:-.3px}
.jm-red{color:#f00;margin:0 7px 0 4px}
.jm-count{margin-right:6px}
.jm-led{width:20px;height:20px;border-radius:50%;background:radial-gradient(circle at 50% 50%,#1c6e0c 0 28%,#3fb81c 30% 70%,#1f8a10 100%)}
.jm-body{flex:1;display:flex;min-height:0}
.jm-tree{width:373px;flex:none;padding-top:2px;background:linear-gradient(#55595c,#55595c) 5px 22px/1px 100px no-repeat,linear-gradient(#55595c,#55595c) 25px 42px/1px 80px no-repeat}
.tr{height:20px;display:flex;align-items:center;font-size:12.500px}
.tr span{white-space:nowrap}
.lvl0{padding-left:1px}
.lvl0 .chev{margin-right:14px}
.lvl0 span{margin-left:8px}
.lvl1{padding-left:21px}
.lvl1 .chev{margin-right:7px}
.lvl1 span{margin-left:6px}
.lvl1 .tg{color:#b6bfc5;stroke-width:3}
.lvl2{padding-left:59px}
.lvl2 span{margin-left:4px}
.sel{background:#0d293e}
.jm-split{width:10px;flex:none;border-right:1px solid #323537}
.jm-panel{flex:1;min-width:0;display:flex;flex-direction:column;padding-left:2px}
.jm-h{font-size:16px;line-height:20px;margin:13px 0 0 8px;color:#bbb}
.jm-field{display:flex;align-items:center;height:23px;margin:7px 10px 1px 8px}
.jm-field label{width:69px;flex:none}
.jm-input{flex:1;height:23px;background:#45494a;border:1px solid #646464;line-height:21px;padding-left:3px}
.jm-legend{margin:8px 11px 0 9px;height:12px;line-height:14px;position:relative;display:flex;align-items:center}
.jm-legend span{background:#3c3f41;padding:0 2px;position:relative;z-index:1;margin-left:2px}
.jm-legend::before{content:"";position:absolute;left:0;right:0;top:6px;height:1px;background:#555}
.jm-file{display:flex;align-items:center;height:23px;margin:5px 0 0 9px}
.jm-file label{width:59px;flex:none}
.jm-fn{flex:none;width:643px}
.jm-btn{height:22px;border:1px solid #5e6060;border-radius:3px;background:#3f4345;display:flex;align-items:center;justify-content:center}
.jm-browse{width:64px;margin-left:9px;font-size:11px}
.jm-log{margin:0 10px 0 8px;width:95px;white-space:nowrap;flex:none}
.jm-cb{width:14px;height:14px;border:1px solid #6b6b6b;border-radius:2px;background:#43474a;flex:none;display:flex;align-items:center;justify-content:center;font-size:11px;line-height:1}
.jm-cbt{margin-left:6px;white-space:nowrap;margin-right:10px}
.jm-conf{width:80px;margin-left:auto;margin-right:6px;height:23px;font-size:13px}
.jm-tablewrap{display:flex;flex:1;min-height:0;margin-top:23px;padding-left:1px}
.jm-table{width:1120px;flex:none}
.jh{display:grid;grid-template-columns:repeat(10,112px);height:25px;background:#45494a;border-top:1px solid #2f3133;border-bottom:1px solid #2f3133;margin-bottom:6px}
.jh span{display:flex;align-items:center;justify-content:center;border-right:1px solid #323537;white-space:nowrap}
.jr{display:grid;grid-template-columns:repeat(10,112px);height:20px;border-bottom:1px solid #515456;font-size:12.500px}
.jr span{border-right:1px solid #515456;text-align:right;padding-right:6px;line-height:19px;white-space:nowrap;letter-spacing:-.55px}
.jr .l{text-align:left;padding-left:6px;padding-right:0;letter-spacing:-.2px}
.jr .c{display:flex;justify-content:center;align-items:center;padding:0}
.skip span:first-child{grid-column-start:7}
.jm-sb{width:9px;margin-left:3px;display:flex;flex-direction:column;justify-content:flex-end;height:731px}
.jm-sbthumb{height:538px;background:#585b5d}
.jm-foot{height:48px;flex:none;border-top:1px solid #2f3133;display:flex;align-items:center;padding-left:6px}
.jm-checks{width:387px;flex:none;display:flex;align-items:center}
.jm-checks .jm-cbt{margin-right:0}
.cb2{margin-left:11px}
.jm-stats{display:grid;grid-template-columns:193px 156px 127px auto}
.jm-stats span{display:flex;gap:8px;white-space:nowrap}
.jm-stats b{font-weight:400}
.st-dark em{color:#bbb}
.st-dark b,.st-black{color:#1a1a1a}
.st-blue{color:#0000e8}
.st-red{color:#e00000}

/* Word */
.word{left:1518px;width:199px;background:#f5f5f5;font-size:13px;color:#222}
.w-top{height:48px;flex:none;display:flex;align-items:center;padding-left:24px}
.w-dash{width:9px;height:1px;background:#bbb;margin-left:34px}
.w-restore{width:48px;height:48px;background:#fff;margin-left:20px;display:flex;align-items:center;justify-content:center}
.w-x{margin-left:18px}
.w-btns{height:24px;margin-top:3px;flex:none;display:flex;gap:9px}
.w-stub{width:6px;border:1px solid #888;border-left:0;border-radius:0 4px 4px 0;background:#fff}
.w-edit,.w-share{display:flex;align-items:center;gap:3px;border-radius:4px;padding-left:5px}
.w-edit{width:83px;background:#fff;border:1px solid #888}
.w-share{width:80px;background:#185abd;color:#fff;gap:5px}
.w-caret{margin-left:auto;padding-right:6px}
.w-ribbon{height:100px;width:190px;margin-top:3px;flex:none;background:#fff;border-radius:0 6px 6px 0;box-shadow:0 1px 3px rgba(0,0,0,.25);display:flex}
.w-clip{width:25px;flex:none;display:flex;flex-direction:column;align-items:flex-end;border-right:1px solid #ddd;margin:5px 0 7px;padding-right:12px}
.w-lab,.w-lab2{white-space:nowrap;font-size:13px;display:block}
.w-lab{margin-top:6px}
.w-lab2{margin-top:24px}
.w-clip svg{margin-right:-10px;margin-top:5px}
.w-addins{width:63px;flex:none;display:flex;flex-direction:column;align-items:center;border-right:1px solid #ddd;margin:5px 0 7px;padding-top:5px}
.w-chev{margin:auto 0 10px 81px}
.w-status{margin-top:auto;height:22px;flex:none;display:flex;align-items:center;font-size:12px;color:#444}
.w-minus{margin-left:19px;width:19px}
.w-slider{width:100px;height:1px;background:#666;display:flex;justify-content:center;align-items:center}
.w-slider i{width:5px;height:12px;background:#555}
.w-plus{margin-left:5px;font-size:14px}
.w-pct{margin-left:10px}

/* Browser */
.browser{left:1717px;width:1920px;background:#fff}
.tabs{height:34px;flex:none;background:#dee1e6;display:flex;align-items:center;padding-left:8px}
.tab{width:205px;height:34px;flex:none;display:flex;align-items:center;padding-left:12px;font-size:12px;color:#3c4043;border-right:1px solid #9aa0a6}
.tab .t{margin-left:8px;width:150px;white-space:nowrap;overflow:hidden}
.tab .x{margin-left:2px}
.tab-on{background:#fff;border-radius:8px 8px 0 0;border-right:0}
.tab:nth-child(5){border-right:0}
.newtab{margin-left:16px}
.br-ctl{gap:34px;padding-right:17px}
.toolbar{height:38px;flex:none;display:flex;align-items:center;padding-left:12px;gap:12px;background:#fff}
.addr{width:1519px;height:34px;margin:0 2px 0 1px;background:#f1f3f4;border-radius:17px;display:flex;align-items:center;padding-left:12px}
.url{margin-left:11px;font-size:14.600px;white-space:nowrap;color:#202124;flex:1;overflow:hidden}
.urlg{color:#5f6368}
.star{margin:0 8px 0 16px}
.update{width:81px;height:28px;border:1px solid #d93025;border-radius:14px;background:#fce8e6;color:#d93025;font-size:12.500px;display:flex;align-items:center;padding-left:12px;justify-content:space-between;padding-right:8px;margin-left:-4px}
.update i{font-style:normal;font-size:16px;color:#d93025}
.bookmarks{height:36px;flex:none;display:flex;align-items:center;padding-left:6px;border-bottom:1px solid #c6c9cd;background:#fff;font-size:12px;color:#3c4043}
.bm{display:flex;align-items:center;gap:8px;padding:0 11.500px 0 10px;white-space:nowrap;flex:none}
.aws{flex:1;min-height:0;display:flex;flex-direction:column;position:relative}
.awsnav{height:42px;flex:none;background:#232f3e;color:#fff;display:flex;align-items:center;font-size:14px;border-bottom:2px solid #3a4552}
.awslogo{margin-left:18px;width:31px;display:flex;flex-direction:column;font:700 18px/16px "Liberation Sans",sans-serif;letter-spacing:-.5px}
.nsep{width:1px;height:26px;background:#414d5c;margin-left:18px}
.svc{margin-left:16px}
.svct{margin-left:9px;font-weight:500}
.nsearch{width:539px;height:29px;margin-left:17px;background:#161e2d;border:1px solid #879596;border-radius:2px;display:flex;align-items:center;padding:0 9px 0 11px;color:#c0c8c9}
.nsearch em{font-style:italic;margin-left:8px}
.nsearch span{margin-left:auto}
.nright{margin-left:auto;display:flex;align-items:center;height:100%}
.nico{width:50px;height:28px;display:flex;align-items:center;justify-content:center;border-right:1px solid #414d5c;color:#fff}
.g-heavy{stroke-width:1.800}
.ncell{display:flex;align-items:center;gap:5px;padding-left:18px;font-size:13.500px;white-space:nowrap;height:28px}
.reg{width:107px;border-right:1px solid #414d5c}
.usr{width:181px}
.awsbody{flex:1;min-height:0;display:flex;background:#fff}
.side{width:225px;flex:none;padding-top:16px;font-size:14px;color:#545b64;display:flex;flex-direction:column;overflow:hidden}
.side a{display:block;height:30px;line-height:30px;padding-left:32px;flex:none}
.side-top{display:flex;align-items:center;justify-content:space-between;padding-right:24px;flex:none}
.side h4{height:30px;flex:none;margin-top:12px;margin-bottom:1px;display:flex;align-items:center;font-weight:700;font-size:14px;gap:8px;padding-left:13px;color:#545b64}
.side .cur{color:#0073bb;font-weight:700}
.new{height:16px;line-height:15px;margin:0 0 0 40px;font-size:12px;font-weight:700;color:#0073bb;border-bottom:1px dashed #0073bb;width:25px;flex:none}
.side .img{margin-top:18px}
.vsb{width:15px;flex:none;background:#f1f1f1;display:flex;flex-direction:column;border-left:1px solid #e6e6e6}
.vsb b{background:#c1c1c1;display:block}
.vsb i{display:block;height:17px;position:relative;flex:none}
.vsb .up::after{content:"";position:absolute;left:3px;top:6px;border:4px solid transparent;border-top:0;border-bottom:5px solid #a3a3a3}
.vsb .dn{margin-top:auto}
.vsb .dn::after{content:"";position:absolute;left:3px;top:3px;border:4px solid transparent;border-bottom:0;border-top:5px solid #50565d}
.vsb-l b{height:661px}
.vsb-r b{height:706px}
.awsmain{flex:1;min-width:0;display:flex;flex-direction:column;border-left:1px solid #d5dbdb}
.top{height:534px;flex:none;background:#fafafa}
.tophead{height:44px;padding:10px 22px 0 20px;display:flex;justify-content:space-between;align-items:flex-start}
.ttl{display:flex;align-items:baseline;gap:6px;margin-top:1px}
.ttl h1{font-size:19px;letter-spacing:-.4px;font-weight:500;color:#16191f}
.cnt{font-size:19px;color:#687078}
.ttl a{font-size:12.500px;font-weight:700;color:#0073bb;margin-left:2px}
.acts{display:flex;gap:8px;font-size:14px;font-weight:500}
.ab{height:28px;border:1px solid #545b64;border-radius:2px;background:#fff;color:#545b64;display:flex;align-items:center;justify-content:center;gap:10px;flex:none}
.ab-ref{width:50px}
.ab-con{width:98px;color:#aab7b8;border-color:#d5dbdb}
.ab-state{width:156px}
.ab-act{width:113px}
.ab-launch{width:154px;background:#f90;border-color:#f90;color:#16191f}
.ab-split{width:30px;margin-left:-6px;background:#f90;border-color:#f90;color:#16191f}
.toprow2{height:27px;padding:0 22px 0 20px;display:flex;align-items:center;justify-content:space-between}
.filt{width:648px;height:27px;background:#fff;border:1px solid #545b64;border-radius:2px;display:flex;align-items:center;padding-left:8px;font-size:14px;color:#687078}
.filt em{font-style:italic;margin-left:9px}
.pager{display:flex;align-items:center;font-size:14px;color:#16191f;gap:14px;height:27px}
.psep{width:1px;height:27px;background:#eaeded}
.pgear{color:#687078;margin:0 5px 0 0}
.grid{display:grid;grid-template-columns:52px 140px 201px 159px 150px 151px 129px 170px 200px 150px 150px 12px}
.ghead{height:33px;margin-top:11px;border-top:2px solid #eaeded;border-bottom:2px solid #eaeded;background:#fafafa;align-items:center;font-size:14px;color:#545b64;font-weight:500}
.hc{height:20px;display:flex;align-items:center;justify-content:space-between;padding:0 13px 0 17px;border-right:1px solid #879596;white-space:nowrap}
.hc-cb{justify-content:flex-start;padding-left:19px;border-right:1px solid #eaeded}
.nm{display:flex;gap:3px;align-items:center}
.sorted{color:#16191f;font-weight:700}
.box{display:block;width:14px;height:14px;border:1px solid #545b64;border-radius:2px;background:#fff}
.row{height:33.500px;background:#fff;border-bottom:2px solid #eaeded;align-items:center;font-size:14px}
.row>div{padding:2px 0 0 17px;white-space:nowrap;overflow:hidden;display:flex;align-items:center;height:100%}
.row>div:first-child{padding-left:19px}
.id{color:#0073bb;letter-spacing:.35px}
.hov{color:#0a4a74}
.row .state{padding-left:16px;color:#687078}
.state span{margin-left:4px;width:76px;flex:none}
.state svg+span+svg{margin-top:-4px}
.state svg+span+svg+svg{margin:-4px 0 0 10px}
.shut span{width:92px}
.al svg{margin-left:13px}
.hsb{height:17px;background:#f1f1f1;display:flex;align-items:center;padding-top:2px}
.hsb i{width:16px}
.hsb b{display:block;width:998px;height:15px;background:#c1c1c1}
.bottom{flex:1;min-height:0;background:#fff;border-top:2px solid #d5dbdb}
.handle{width:14px;height:7px;margin:6px auto 0;border-top:2px solid #545b64;border-bottom:2px solid #545b64}
.bothead{display:flex;justify-content:space-between;align-items:center;padding:0 28px 0 21px}
.bothead h3{font-size:18px;font-weight:700;color:#16191f}
.botico{display:flex;align-items:center;color:#545b64;gap:9px}
.psep2{width:1px;height:24px;background:#eaeded}
.awsfoot{height:32px;flex:none;background:#232f3e;border-top:1px solid #3a4552;color:#fff;display:flex;justify-content:flex-end;align-items:center;font-size:13.500px;padding-right:16px;gap:25px;white-space:nowrap}
.cr{margin-right:4px}
.statusbubble{position:absolute;left:0;bottom:0;width:637px;height:22px;background:#dee1e6;border-radius:0 3px 0 0;font-size:11.800px;line-height:22px;padding-left:5px;color:#3c4043;white-space:nowrap}

/* Clock */
.clock{left:397px;top:215px;width:727px;height:508px;flex-direction:row;background:#fbfbfb;border-radius:8px;overflow:hidden;box-shadow:0 4px 14px rgba(0,0,0,.35);z-index:2;color:#1a1a1a}
.c-side{width:48px;flex:none;background:#f3f3f3;border-right:1px solid #e8e8e8;display:flex;flex-direction:column;align-items:center}
.ci{width:40px;height:40px;flex:none;display:flex;align-items:center;justify-content:center;border-radius:5px;position:relative}
.ci-menu{height:38px}
.ci-2{height:39px}
.ci-on{background:#eaeaea;height:36px;margin:2px 0}
.ci-on::before{content:"";position:absolute;left:0;top:11px;width:3px;height:15px;border-radius:2px;background:#0067c0}
.ci-bf{width:24px;height:24px;margin:auto 0 10px;border-radius:50%;background:#dcdcdc;font-size:10px;font-weight:500;display:flex;align-items:center;justify-content:center}
.ci-set{margin-bottom:4px}
.ci-gear{color:#222}
.c-main{flex:1;min-width:0;display:flex;flex-direction:column}
.c-title{height:38px;flex:none;display:flex;align-items:center;padding-left:8px;font-size:13px}
.c-name{margin-left:16px}
.c-ctl{gap:34px;padding-right:17px}
.c-expand{display:flex;justify-content:flex-end;gap:24px;height:16px;margin-top:69px;padding-right:91px}
.c-time{display:flex;align-items:baseline;padding-left:80px;height:90px;font-family:"Open Sans",Roboto,sans-serif;font-weight:350;font-size:108px;line-height:90px;letter-spacing:-3.200px;color:#1a1a1a;margin-top:1px;white-space:nowrap}
.c-ms{font-size:76px;letter-spacing:-1px;margin-left:11px}
.c-labels{display:flex;margin-top:15px;padding-left:66px;font-size:19px;height:24px;line-height:24px}
.c-labels span{width:146px;text-align:center}
.c-btns{display:flex;align-items:center;gap:28px;padding-left:214px;margin-top:44px}
.cb{width:64px;height:64px;border-radius:50%;background:#fff;border:1px solid #eee;border-bottom:2px solid #d8d8d8;display:flex;align-items:center;justify-content:center}
.cb-pause{width:66px;height:66px;background:#0067c0;border:0}
```
